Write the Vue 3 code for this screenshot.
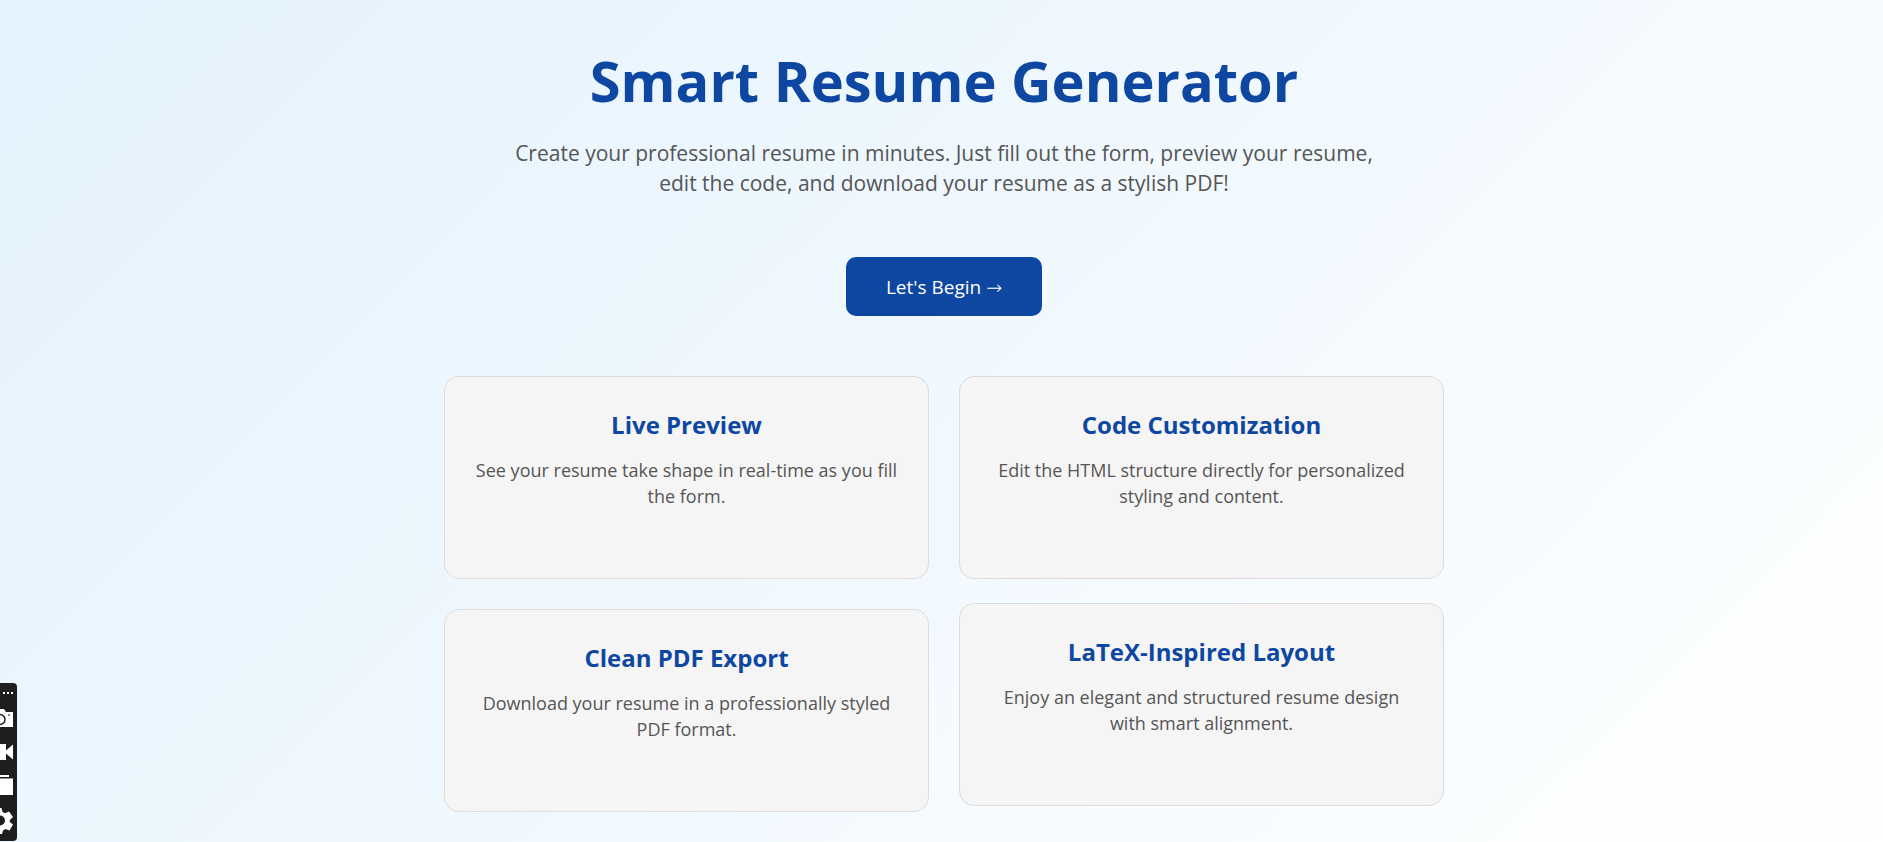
<script setup>
const features = [
  { title: 'Live Preview', text: 'See your resume take shape in real-time as you fill the form.' },
  { title: 'Code Customization', text: 'Edit the HTML structure directly for personalized styling and content.' },
  { title: 'Clean PDF Export', text: 'Download your resume in a professionally styled PDF format.' },
  { title: 'LaTeX-Inspired Layout', text: 'Enjoy an elegant and structured resume design with smart alignment.', raised: true },
]
</script>

<template>
  <main class="page">
    <header class="hero">
      <h1>Smart Resume Generator</h1>
      <p>
        Create your professional resume in minutes. Just fill out the form, preview your resume,
        edit the code, and download your resume as a stylish PDF!
      </p>
      <button type="button" class="begin">Let's Begin <span class="arrow">→</span></button>
    </header>
    <section class="features">
      <article v-for="f in features" :key="f.title" class="card" :class="{ raised: f.raised }">
        <h2>{{ f.title }}</h2>
        <p>{{ f.text }}</p>
      </article>
    </section>
    <aside class="dock" aria-label="Capture toolbar">
      <button type="button" class="more" aria-label="More">
        <svg width="17" height="20" viewBox="0 0 17 20" fill="#fff"><path d="M3 9h2v2H3zM7 9h2v2H7zM11 9h2v2h-2z" /></svg>
      </button>
      <button type="button" aria-label="Screenshot">
        <svg width="17" height="34" viewBox="0 0 17 34">
          <path d="M0 6h4l2 3h7v15H0z" fill="#fff" />
          <circle cx="0" cy="16.500" r="5" fill="none" stroke="#1e1e1e" stroke-width="1.500" />
          <path d="M8 11.500h2v1H8z" fill="#1e1e1e" />
        </svg>
      </button>
      <button type="button" aria-label="Record">
        <svg width="17" height="34" viewBox="0 0 17 34" fill="#fff"><path d="M0 7h6v6.500L13 7.500v15L6 16.500V23H0z" /></svg>
      </button>
      <button type="button" aria-label="Gallery">
        <svg width="17" height="34" viewBox="0 0 17 34" fill="#fff"><path d="M0 4h9v2H0zM0 7.500h13V24H0z" /></svg>
      </button>
      <button type="button" aria-label="Settings">
        <svg width="17" height="34" viewBox="0 0 17 34">
          <path d="M0 3h1.500l1 4 2.500 1.200 4-1.700 4 5.500-3.200 3v2l3.200 2.500-3.500 6-4-1.500-2.500 1.500-1 3.500H0z" fill="#fff" />
          <circle cx="0" cy="15.500" r="5" fill="#1e1e1e" />
        </svg>
      </button>
    </aside>
  </main>
</template>

<style>
body {
  margin: 0;
}
</style>

<style scoped>
.page {
  box-sizing: border-box;
  min-height: 100vh;
  padding: 38px 0 30px 5px;
  background: linear-gradient(135deg, #e3f2fd, #ffffff);
  font-family: "Segoe UI", "Open Sans", "Noto Sans", sans-serif;
  color: #555;
  text-align: center;
}
.hero {
  display: flex;
  flex-direction: column;
  align-items: center;
}
h1 {
  margin: 0;
  font-size: 56px;
  line-height: 84px;
  font-weight: 700;
  color: #0d47a1;
}
.hero p {
  max-width: 900px;
  margin: 16px 0 59px;
  font-size: 21px;
  line-height: 30px;
}
.begin {
  padding: 17px 40px 15px;
  border: 0;
  border-radius: 10px;
  background: #0d47a1;
  color: #fff;
  font-family: inherit;
  font-size: 19px;
  line-height: 27px;
}
.arrow {
  font-family: "DejaVu Sans", sans-serif;
  font-weight: 200;
}
.features {
  display: grid;
  grid-template-columns: 1fr 1fr;
  gap: 30px;
  max-width: 1000px;
  margin: 60px auto 0;
}
.card {
  box-sizing: border-box;
  min-height: 203px;
  padding: 30px 28px;
  border: 1px solid #ddd;
  border-radius: 15px;
  background: #f5f5f5;
}
.raised {
  transform: translateY(-6px);
}
h2 {
  margin: 0 0 14px;
  font-size: 24px;
  line-height: 36px;
  font-weight: 700;
  color: #0d47a1;
}
.card p {
  margin: 0;
  font-size: 18px;
  line-height: 26px;
}
.dock {
  position: fixed;
  left: 0;
  bottom: 1px;
  display: flex;
  flex-direction: column;
  width: 17px;
  padding-bottom: 2px;
  border-radius: 0 4px 4px 0;
  background: #1e1e1e;
  overflow: hidden;
}
.dock button {
  display: block;
  padding: 0;
  border: 0;
  background: none;
}
.dock svg {
  display: block;
}
</style>
